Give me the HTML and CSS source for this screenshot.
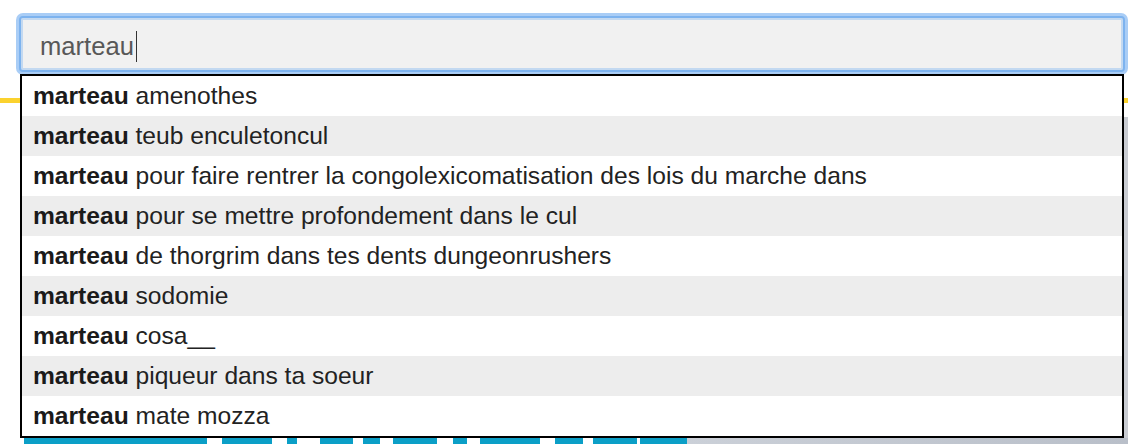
FILE: index.html
```html
<!DOCTYPE html>
<html lang="fr">
<head>
<meta charset="utf-8">
<title>marteau</title>
<link rel="stylesheet" href="styles.css">
</head>
<body>
<div class="page">
  <div class="search">
    <div class="searchbox"><span class="query">marteau</span><span class="caret"></span></div>
  </div>
  <div class="backdrop">
    <div class="rule"></div>
    <div class="content">
      <div class="main"></div>
      <div class="side"></div>
    </div>
    <div class="banner">
      <i class="w"></i><i class="b"></i><i class="w"></i><i class="b"></i><i class="w"></i><i class="b"></i><i class="w"></i><i class="b"></i><i class="w"></i><i class="b"></i><i class="w"></i><i class="b"></i><i class="w"></i><i class="b"></i><i class="w"></i><i class="b"></i><i class="w"></i><i class="b"></i><i class="w"></i><i class="b"></i><i class="w"></i><i class="b"></i><i class="g"></i>
    </div>
  </div>
  <ul class="suggestions">
    <li><b>marteau</b> amenothes</li>
    <li><b>marteau</b> teub enculetoncul</li>
    <li><b>marteau</b> pour faire rentrer la congolexicomatisation des lois du marche dans</li>
    <li><b>marteau</b> pour se mettre profondement dans le cul</li>
    <li><b>marteau</b> de thorgrim dans tes dents dungeonrushers</li>
    <li><b>marteau</b> sodomie</li>
    <li><b>marteau</b> cosa__</li>
    <li><b>marteau</b> piqueur dans ta soeur</li>
    <li><b>marteau</b> mate mozza</li>
  </ul>
</div>
</body>
</html>
```
FILE: styles.css
```css
* { box-sizing: border-box; }
html, body { margin: 0; padding: 0; background: #fff; }
.page {
  position: relative;
  width: 1128px;
  height: 444px;
  overflow: hidden;
  background: #fff;
  font-family: "Liberation Sans", Arial, Helvetica, sans-serif;
}
.search {
  padding: 16px 3px 3px 19px;
}
.searchbox {
  height: 56px;
  display: flex;
  align-items: center;
  padding: 4px 0 0 19px;
  background: #f1f1f1;
  border: 2px solid #7db3ef;
  border-radius: 4px;
  box-shadow: 0 0 0 3px #a9cdf6, inset 0 0 0 2px #c3d9f1;
  font-size: 25.6px;
  color: #585858;
}
.query { line-height: 31px; }
.caret {
  width: 1px;
  height: 31px;
  margin-left: 2px;
  background: #333;
}
.backdrop {
  display: flex;
  flex-direction: column;
  height: 369px;
  padding-top: 23px;
}
.rule {
  height: 5px;
  background: #fbd22e;
}
.content {
  flex: 1;
  display: flex;
  padding-top: 14px;
}
.main { flex: 1; }
.side { width: 4px; background: #c9ccd2; }
.banner {
  height: 6px;
  display: grid;
  grid-template-columns: 24px 183px 15px 50px 15px 10px 23px 33px 10px 17px 13px 44px 16px 14px 13px 60px 15px 28px 10px 44px 3px 47px 1fr;
}
.banner .w { background: #fff; }
.banner .b { background: #0b9fc7; }
.banner .g { background: linear-gradient(90deg, #cbd0d8, #b9bfc9); }
.suggestions {
  position: absolute;
  left: 20px;
  top: 74px;
  width: 1104px;
  margin: 0;
  padding: 0;
  list-style: none;
  background: #fff;
  border: 2px solid #000;
}
.suggestions li {
  height: 40px;
  line-height: 40px;
  padding-left: 11px;
  font-size: 24.6px;
  color: #222;
  white-space: nowrap;
}
.suggestions li:nth-child(even) { background: #ededed; }
.suggestions b { font-weight: bold; color: #1a1a1a; }
```
